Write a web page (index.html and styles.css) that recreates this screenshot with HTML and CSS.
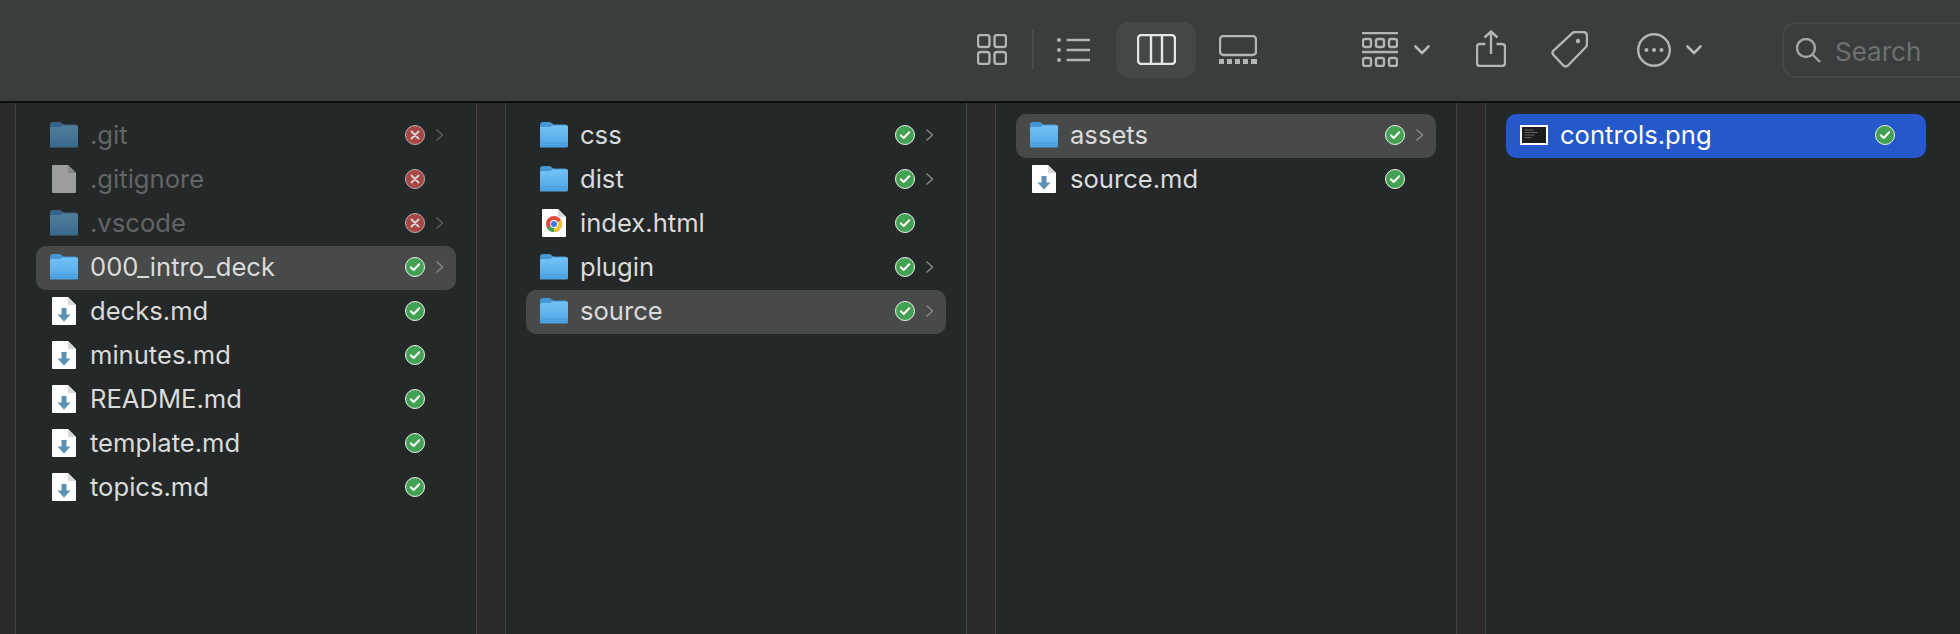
FILE: index.html
```html
<!DOCTYPE html>
<html lang="en">
<head>
<meta charset="UTF-8" />
<title>Finder</title>
<link rel="stylesheet" href="styles.css">
</head>
<body>
<svg class="defs" width="0" height="0">
  <defs>
    <linearGradient id="foldergrad" x1="0" y1="0" x2="0" y2="1">
      <stop offset="0" stop-color="#74c2f6"/>
      <stop offset="1" stop-color="#4ba3e3"/>
    </linearGradient>
    <symbol id="folder" viewBox="0 0 28 26">
      <path d="M0 3q0-3 3-3h6q1.500 0 2.500 1l2 1.500h11.500q3 0 3 2.500v4H0z" fill="#4496d4"/>
      <path d="M0 6.500q0-1.500 1.500-1.500h8q1 0 2-.8l1-.7h14q1.500 0 1.500 1.500v19q0 1.500-1.500 1.500H1.500Q0 26 0 24.500z" fill="url(#foldergrad)"/>
      <path d="M0 21h28M0 23.500h28" stroke="#3f8fcb" stroke-width=".6" opacity=".7"/>
    </symbol>
    <symbol id="doc" viewBox="0 0 24 28">
      <path d="M1 0h15l8 8v19a1 1 0 0 1-1 1H1a1 1 0 0 1-1-1V1a1 1 0 0 1 1-1z" fill="#fff"/>
      <path d="M16 0l8 8h-7a1 1 0 0 1-1-1z" fill="#d8d8d8"/>
    </symbol>
    <symbol id="mddoc" viewBox="0 0 24 28">
      <use href="#doc"/>
      <path d="M9.500 11h5v6.500h4l-6.500 7-6.500-7h4z" fill="#5c90b2"/>
    </symbol>
    <symbol id="ok" viewBox="0 0 20 20">
      <circle cx="10" cy="10" r="9.500" fill="#42a152" stroke="#eef3ee" stroke-width="1"/>
      <path d="M5.800 10.300l2.900 2.700 5.500-5.700" fill="none" stroke="#fff" stroke-width="2" stroke-linecap="round" stroke-linejoin="round"/>
    </symbol>
    <symbol id="bad" viewBox="0 0 20 20">
      <circle cx="10" cy="10" r="9.500" fill="#a64746" stroke="#b9b2b1" stroke-width="1"/>
      <path d="M6.500 6.500l7 7M13.500 6.500l-7 7" fill="none" stroke="#d9cfce" stroke-width="2" stroke-linecap="round"/>
    </symbol>
    <symbol id="more" viewBox="0 0 8 12">
      <path d="M1 1l5.500 5L1 11" fill="none" stroke="#858787" stroke-width="1.500" stroke-linecap="round" stroke-linejoin="round"/>
    </symbol>
    <symbol id="down" viewBox="0 0 16 10">
      <path d="M1.500 1.500L8 8l6.500-6.500" fill="none" stroke="#b5b7b7" stroke-width="2.600" stroke-linecap="round" stroke-linejoin="round"/>
    </symbol>
  </defs>
</svg>

<div class="toolbar">
  <svg class="tool t-grid" viewBox="0 0 30 31">
    <rect x="1" y="1" width="11.500" height="12" rx="2.500"/><rect x="17.500" y="1" width="11.500" height="12" rx="2.500"/>
    <rect x="1" y="18" width="11.500" height="12" rx="2.500"/><rect x="17.500" y="18" width="11.500" height="12" rx="2.500"/>
  </svg>
  <div class="tool-sep"></div>
  <svg class="tool t-list" viewBox="0 0 33 24">
    <circle class="solid" cx="2" cy="2" r="2"/><circle class="solid" cx="2" cy="12" r="2"/><circle class="solid" cx="2" cy="22" r="2"/>
    <path d="M9.500 2H33M9.500 12H33M9.500 22H33"/>
  </svg>
  <div class="tool-active">
    <svg class="tool t-cols" viewBox="0 0 39 31">
      <rect x="1" y="1" width="37" height="29" rx="3.500"/>
      <path d="M14 1v29M25 1v29"/>
    </svg>
  </div>
  <svg class="tool t-gallery" viewBox="0 0 38 29">
    <rect x="1" y="1" width="36" height="19" rx="3.500"/>
    <path class="dots" d="M0 26.500h5M8 26.500h5M16 26.500h5M24 26.500h5M32 26.500h6"/>
  </svg>
  <svg class="tool t-group" viewBox="0 0 36 35">
    <path d="M0 1h36M0 20h36"/>
    <rect x="1" y="7" width="8" height="8" rx="2"/><rect x="14" y="7" width="8" height="8" rx="2"/><rect x="27" y="7" width="8" height="8" rx="2"/>
    <rect x="1" y="26" width="8" height="8" rx="2"/><rect x="14" y="26" width="8" height="8" rx="2"/><rect x="27" y="26" width="8" height="8" rx="2"/>
  </svg>
  <svg class="t-down"><use href="#down"/></svg>
  <svg class="tool t-share" viewBox="0 0 30 37">
    <path d="M9.500 14H4q-3 0-3 3v16q0 3 3 3h22q3 0 3-3V17q0-3-3-3h-5.500"/>
    <path d="M15 24V1.500M8.500 7.500L15 1.500l6.500 6"/>
  </svg>
  <svg class="tool t-tag" viewBox="0 0 37 37">
    <path d="M21 2.500q1.500-1.500 3.500-1.500H32q4 0 4 4v8q0 2-1.500 3.500L17 34.500q-2 2-4.500 0L2.500 24q-2-2.500 0-4.500z"/>
    <circle class="solid" cx="27" cy="10" r="2.200"/>
  </svg>
  <svg class="tool t-circle" viewBox="0 0 34 34">
    <circle cx="17" cy="17" r="15.800"/>
    <circle class="solid" cx="9.500" cy="17" r="2"/><circle class="solid" cx="17" cy="17" r="2"/><circle class="solid" cx="24.500" cy="17" r="2"/>
  </svg>
  <svg class="t-down t-down2"><use href="#down"/></svg>
  <div class="search">
    <svg class="tool t-mag" viewBox="0 0 25 25">
      <circle cx="10" cy="10" r="9"/>
      <path d="M16.500 16.500L24 24"/>
    </svg>
    <span class="search-label">Search</span>
  </div>
</div>

<div class="browser">
  <div class="gutter first"></div>

  <div class="column">
    <div class="row dim"><svg class="ico"><use href="#folder"/></svg><span class="name">.git</span><svg class="st"><use href="#bad"/></svg><svg class="arr"><use href="#more"/></svg></div>
    <div class="row dim"><svg class="ico doc plain"><use href="#doc"/></svg><span class="name">.gitignore</span><svg class="st"><use href="#bad"/></svg></div>
    <div class="row dim"><svg class="ico"><use href="#folder"/></svg><span class="name">.vscode</span><svg class="st"><use href="#bad"/></svg><svg class="arr"><use href="#more"/></svg></div>
    <div class="row open"><svg class="ico"><use href="#folder"/></svg><span class="name">000_intro_deck</span><svg class="st"><use href="#ok"/></svg><svg class="arr"><use href="#more"/></svg></div>
    <div class="row"><svg class="ico doc"><use href="#mddoc"/></svg><span class="name">decks.md</span><svg class="st"><use href="#ok"/></svg></div>
    <div class="row"><svg class="ico doc"><use href="#mddoc"/></svg><span class="name">minutes.md</span><svg class="st"><use href="#ok"/></svg></div>
    <div class="row"><svg class="ico doc"><use href="#mddoc"/></svg><span class="name">README.md</span><svg class="st"><use href="#ok"/></svg></div>
    <div class="row"><svg class="ico doc"><use href="#mddoc"/></svg><span class="name">template.md</span><svg class="st"><use href="#ok"/></svg></div>
    <div class="row"><svg class="ico doc"><use href="#mddoc"/></svg><span class="name">topics.md</span><svg class="st"><use href="#ok"/></svg></div>
  </div>
  <div class="gutter"></div>

  <div class="column">
    <div class="row"><svg class="ico"><use href="#folder"/></svg><span class="name">css</span><svg class="st"><use href="#ok"/></svg><svg class="arr"><use href="#more"/></svg></div>
    <div class="row"><svg class="ico"><use href="#folder"/></svg><span class="name">dist</span><svg class="st"><use href="#ok"/></svg><svg class="arr"><use href="#more"/></svg></div>
    <div class="row">
      <svg class="ico doc" viewBox="0 0 24 28">
        <use href="#doc" width="24" height="28"/>
        <circle cx="12" cy="15" r="8" fill="#dd4b3e"/>
        <path d="M12 15l-7 4a8 8 0 0 0 7 4z" fill="#3aa757"/>
        <path d="M12 15v8a8 8 0 0 0 8-8 8 8 0 0 0-1-4z" fill="#f4c430"/>
        <circle cx="12" cy="15" r="3.900" fill="#fff"/>
        <circle cx="12" cy="15" r="3" fill="#3f78e0"/>
      </svg>
      <span class="name">index.html</span><svg class="st"><use href="#ok"/></svg>
    </div>
    <div class="row"><svg class="ico"><use href="#folder"/></svg><span class="name">plugin</span><svg class="st"><use href="#ok"/></svg><svg class="arr"><use href="#more"/></svg></div>
    <div class="row open"><svg class="ico"><use href="#folder"/></svg><span class="name">source</span><svg class="st"><use href="#ok"/></svg><svg class="arr"><use href="#more"/></svg></div>
  </div>
  <div class="gutter"></div>

  <div class="column">
    <div class="row open"><svg class="ico"><use href="#folder"/></svg><span class="name">assets</span><svg class="st"><use href="#ok"/></svg><svg class="arr"><use href="#more"/></svg></div>
    <div class="row"><svg class="ico doc"><use href="#mddoc"/></svg><span class="name">source.md</span><svg class="st"><use href="#ok"/></svg></div>
  </div>
  <div class="gutter"></div>

  <div class="column last">
    <div class="row picked">
      <svg class="ico" viewBox="0 0 28 26">
        <rect x="1" y="4" width="26" height="18" fill="#1c1c1c" stroke="#fff" stroke-width="2"/>
        <path d="M4.500 8h9M4.500 10.500h13M4.500 13h10M4.500 15.500h7" stroke="#777" stroke-width=".8"/>
      </svg>
      <span class="name">controls.png</span><svg class="st"><use href="#ok"/></svg>
    </div>
  </div>
</div>
</body>
</html>
```
FILE: styles.css
```css
* {
  box-sizing: border-box;
}
html, body {
  margin: 0;
  padding: 0;
  height: 100%;
  overflow: hidden;
}
body {
  display: flex;
  flex-direction: column;
  background: #252828;
  font-family: Inter, "Noto Sans", sans-serif;
}
.defs {
  position: absolute;
}

/* toolbar */
.toolbar {
  display: flex;
  align-items: center;
  flex: none;
  height: 103px;
  padding: 0 0 2px 977px;
  background: #3a3d3d;
  border-bottom: 2px solid #0c0d0d;
}
.toolbar > * {
  flex: none;
}
.tool {
  fill: none;
  stroke: #b3b5b5;
  stroke-width: 2.400;
}
.tool .solid {
  fill: #b3b5b5;
  stroke: none;
}
.t-grid {
  width: 30px;
  height: 31px;
}
.tool-sep {
  width: 2px;
  height: 40px;
  margin: 0 23px 0 25px;
  background: #484b4b;
}
.t-list {
  width: 33px;
  height: 24px;
}
.tool-active {
  display: flex;
  align-items: center;
  justify-content: center;
  width: 80px;
  height: 56px;
  margin: 0 23px 0 26px;
  border-radius: 13px;
  background: #434748;
}
.t-cols {
  width: 39px;
  height: 31px;
  stroke: #e4e5e5;
}
.t-gallery {
  width: 38px;
  height: 29px;
}
.t-gallery .dots {
  stroke-width: 5;
  stroke-linecap: butt;
}
.t-group {
  width: 36px;
  height: 35px;
  margin-left: 105px;
}
.t-down {
  width: 16px;
  height: 10px;
  margin-left: 16px;
}
.t-share {
  width: 30px;
  height: 37px;
  margin: -3px 0 0 46px;
}
.t-tag {
  width: 37px;
  height: 37px;
  margin-left: 45px;
}
.t-circle {
  width: 34px;
  height: 34px;
  margin-left: 49px;
}
.t-down2 {
  margin-left: 15px;
}
.search {
  display: flex;
  align-items: center;
  width: 260px;
  height: 56px;
  margin-left: 80px;
  padding-left: 12px;
  border: 2px solid #454848;
  border-radius: 14px;
  color: #6d7070;
  font-size: 26px;
}
.t-mag {
  width: 25px;
  height: 25px;
  margin: 2px 14px 0 0;
  stroke: #a3a5a5;
}
.search-label {
  margin-top: 4px;
}

/* columns */
.browser {
  display: flex;
  flex: 1;
  min-height: 0;
}
.gutter {
  flex: none;
  width: 30px;
  background: #2c2a2a;
  border-left: 1px solid #434444;
  border-right: 1px solid #404141;
}
.first {
  width: 16px;
  border-left: 0;
}
.column {
  flex: none;
  width: 460px;
  padding: 11px 0 0 20px;
}
.last {
  width: 474px;
}
.row {
  display: grid;
  grid-template-columns: 40px 315px 20px 11px 8px;
  align-items: center;
  width: 420px;
  height: 44px;
  padding: 0 0 2px 14px;
  border-radius: 10px;
  color: #dadbdb;
  font-size: 25.6px;
}
.open {
  background: #484949;
}
.picked {
  background: #2558cb;
  color: #fff;
}
.dim {
  color: #626565;
}
.dim svg {
  opacity: .55;
}
.dim .st {
  opacity: 1;
}
.ico {
  width: 28px;
  height: 26px;
}
.doc {
  width: 24px;
  height: 28px;
  margin-left: 2px;
}
.name {
  margin-top: -1px;
  white-space: nowrap;
}
.st {
  grid-column: 3;
  width: 20px;
  height: 20px;
}
.arr {
  grid-column: 5;
  width: 8px;
  height: 12px;
}
```
